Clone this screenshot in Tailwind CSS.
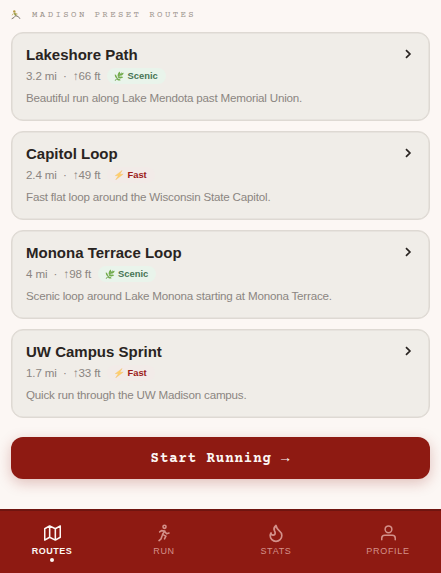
<!DOCTYPE html>
<html lang="en">
<head>
  <meta charset="UTF-8" />
  <meta name="viewport" content="width=device-width, initial-scale=1.0" />
  <title>Madison Routes</title>
  <script src="https://cdn.jsdelivr.net/npm/@tailwindcss/browser@4"></script>
</head>
<body class="bg-[#fcf7f4] h-[573px] overflow-hidden flex flex-col font-['Liberation_Sans',Arial,sans-serif] text-[#292421]">
  <!-- Shared icons -->
  <svg class="hidden">
    <symbol id="leaf" viewBox="0 0 12 12">
      <path d="M1 11.5C4 9.5 7 6 9 2" fill="none" stroke="#4d8a2d" stroke-width="1" />
      <path d="M4.8 7.5C3.600 4.500 5 2 6.800 .5C8 3 7.200 5.500 4.800 7.500zM7 5.300C8 3 9.500 2 11.600 2C11.300 4.500 9.500 5.700 7 5.300zM4.800 8.200C7 6.500 9.500 6.300 11 7.300C9.500 9.300 7 9.500 4.800 8.200zM3.500 9C1.500 8 .7 6 1 3.800C3.200 5 4 7 3.500 9zM3.200 9.600C5 9 7 9.500 8 11C6 12 4.200 11.300 3.200 9.600z" fill="#72ad4c" />
    </symbol>
    <symbol id="bolt" viewBox="0 0 12 12">
      <path d="M9.800 .5L1.500 6.800L5.300 6.600L2 11.800L11 5L7 5.100z" fill="#ffd06a" stroke="#f4b860" stroke-width=".4" />
    </symbol>
    <symbol id="chevron" viewBox="0 0 10 12">
      <path d="M3 2.200L6.900 6L3 9.800" fill="none" stroke="#292421" stroke-width="1.700" />
    </symbol>
  </svg>

  <main class="h-[509px] shrink-0 px-[11px] pt-[9px]">
    <h1 class="flex items-center h-3 text-[9px] leading-3 tracking-[2.42px] text-[#9c958e] font-['Courier_Prime','Courier_New','Liberation_Mono',monospace]">
      <svg class="w-[10px] h-[10px] mr-[11px]" viewBox="0 0 10 10" fill="none">
        <circle cx="3.300" cy="1.500" r="1.200" fill="#b59a42" />
        <path d="M3.500 3L4.900 5.500" stroke="#929b44" stroke-width="1.800" />
        <path d="M4.900 5.500L3 7.500L.7 8.800M5 5.800L7.300 6.600L9 8.800" stroke="#7d766d" stroke-width="1" />
        <path d="M2.300 3.500L1.200 5.300M4.500 3.500L6.500 4" stroke="#c5aa62" stroke-width=".9" />
      </svg>
      MADISON PRESET ROUTES
    </h1>

    <!-- Route cards -->
    <section class="mt-[10.500px] flex flex-col gap-[9.500px]">
      <article class="relative h-[89.500px] rounded-xl border-[1.500px] border-[#ded9d3] bg-[#f0ede8] shadow-[inset_0_0_0_.5px_#ded9d3] pl-[14px] pt-[13px]">
        <h2 class="text-[15px] leading-[18px] font-bold">Lakeshore Path</h2>
        <div class="flex items-center h-[18px] mt-[3px] text-[11.600px] tracking-[-.13px] text-[#8b8581]">
          <span class="whitespace-pre">3.2 mi  ·  ↑66 ft</span>
          <span class="flex items-center h-4 mt-px ml-[7px] pl-[7px] pr-2 rounded-full bg-[#e9f4eb] text-[9.400px] tracking-normal font-bold text-[#487555]"><svg class="w-[10px] h-[10px] mr-[3px] -mt-px"><use href="#leaf" /></svg>Scenic</span>
        </div>
        <p class="mt-[5px] text-[11.600px] leading-4 tracking-[-.19px] text-[#8b8581]">Beautiful run along Lake Mendota past Memorial Union.</p>
        <svg class="absolute right-4 top-[15px] w-[10px] h-3"><use href="#chevron" /></svg>
      </article>

      <article class="relative h-[89.500px] rounded-xl border-[1.500px] border-[#ded9d3] bg-[#f0ede8] shadow-[inset_0_0_0_.5px_#ded9d3] pl-[14px] pt-[13px]">
        <h2 class="text-[15px] leading-[18px] font-bold">Capitol Loop</h2>
        <div class="flex items-center h-[18px] mt-[3px] text-[11.600px] tracking-[-.13px] text-[#8b8581]">
          <span class="whitespace-pre">2.4 mi  ·  ↑49 ft</span>
          <span class="flex items-center h-4 mt-px ml-[7px] pl-[7px] pr-2 rounded-full bg-[#f2ebe8] text-[9.400px] tracking-normal font-bold text-[#9c1c18]"><svg class="w-[10px] h-[10px] mr-[3px] -mt-px"><use href="#bolt" /></svg>Fast</span>
        </div>
        <p class="mt-[5px] text-[11.600px] leading-4 tracking-[-.19px] text-[#8b8581]">Fast flat loop around the Wisconsin State Capitol.</p>
        <svg class="absolute right-4 top-[15px] w-[10px] h-3"><use href="#chevron" /></svg>
      </article>

      <article class="relative h-[89.500px] rounded-xl border-[1.500px] border-[#ded9d3] bg-[#f0ede8] shadow-[inset_0_0_0_.5px_#ded9d3] pl-[14px] pt-[13px]">
        <h2 class="text-[15px] leading-[18px] font-bold">Monona Terrace Loop</h2>
        <div class="flex items-center h-[18px] mt-[3px] text-[11.600px] tracking-[-.13px] text-[#8b8581]">
          <span class="whitespace-pre">4 mi  ·  ↑98 ft</span>
          <span class="flex items-center h-4 mt-px ml-[7px] pl-[7px] pr-2 rounded-full bg-[#e9f4eb] text-[9.400px] tracking-normal font-bold text-[#487555]"><svg class="w-[10px] h-[10px] mr-[3px] -mt-px"><use href="#leaf" /></svg>Scenic</span>
        </div>
        <p class="mt-[5px] text-[11.600px] leading-4 tracking-[-.19px] text-[#8b8581]">Scenic loop around Lake Monona starting at Monona Terrace.</p>
        <svg class="absolute right-4 top-[15px] w-[10px] h-3"><use href="#chevron" /></svg>
      </article>

      <article class="relative h-[89.500px] rounded-xl border-[1.500px] border-[#ded9d3] bg-[#f0ede8] shadow-[inset_0_0_0_.5px_#ded9d3] pl-[14px] pt-[13px]">
        <h2 class="text-[15px] leading-[18px] font-bold">UW Campus Sprint</h2>
        <div class="flex items-center h-[18px] mt-[3px] text-[11.600px] tracking-[-.13px] text-[#8b8581]">
          <span class="whitespace-pre">1.7 mi  ·  ↑33 ft</span>
          <span class="flex items-center h-4 mt-px ml-[7px] pl-[7px] pr-2 rounded-full bg-[#f2ebe8] text-[9.400px] tracking-normal font-bold text-[#9c1c18]"><svg class="w-[10px] h-[10px] mr-[3px] -mt-px"><use href="#bolt" /></svg>Fast</span>
        </div>
        <p class="mt-[5px] text-[11.600px] leading-4 tracking-[-.19px] text-[#8b8581]">Quick run through the UW Madison campus.</p>
        <svg class="absolute right-4 top-[15px] w-[10px] h-3"><use href="#chevron" /></svg>
      </article>
    </section>

    <button class="mt-[18.500px] w-full h-[42px] pt-[3px] rounded-xl bg-[#8e1a12] shadow-[0_4px_14px_#8e1a1240] text-[#fcf7f4] text-sm font-bold tracking-[.93px] font-['Courier_Prime','Courier_New','Liberation_Mono',monospace]">Start Running →</button>
  </main>

  <!-- Bottom tabs -->
  <nav class="h-16 shrink-0 w-[448px] -ml-1 flex border-t-2 border-[#6f1510] bg-[#8e1a12] text-[9px] leading-3 tracking-[.7px] text-[#d4918a]">
    <a href="#" class="w-28 flex flex-col items-center pt-[13px] text-[#fcf7f4] font-bold tracking-[.5px]">
      <svg class="w-[17px] h-[18px]" viewBox="0 0 24 24" fill="none" stroke="currentColor" stroke-width="2.200" stroke-linejoin="round"><path d="M1 6V22L8 18L16 22L23 18V2L16 6L8 2zM8 2V18M16 6V22" /></svg>
      <span class="mt-[3px]">ROUTES</span>
      <span class="mt-px size-1 rounded-full bg-[#fcf7f4]"></span>
    </a>
    <a href="#" class="w-28 flex flex-col items-center pt-[13px]">
      <svg class="w-3 h-[18px]" viewBox="1 1 35 50" fill="none" stroke="currentColor" stroke-width="4.600" stroke-linecap="round" stroke-linejoin="round"><circle cx="20" cy="8" r="4.500" /><path d="M6 23L11 19L21 20L14 30L24 35L20 43M22 23L26 28L33 26M13 34L10 43L4 48" /></svg>
      <span class="mt-[3px]">RUN</span>
    </a>
    <a href="#" class="w-28 flex flex-col items-center pt-[13px]">
      <svg class="w-[20px] h-[20px] -my-px" viewBox="0 0 24 24" fill="none" stroke="currentColor" stroke-width="2" stroke-linecap="round" stroke-linejoin="round"><path d="M8.500 14.500A2.500 2.500 0 0 0 11 12c0-1.380-.5-2-1-3-1.072-2.143-.224-4.054 2-6 .5 2.500 2 4.900 4 6.500 2 1.600 3 3.500 3 5.500a7 7 0 1 1-14 0c0-1.153.433-2.294 1-3a2.500 2.500 0 0 0 2.500 2.500z" /></svg>
      <span class="mt-[3px]">STATS</span>
    </a>
    <a href="#" class="w-28 flex flex-col items-center pt-[13px]">
      <svg class="w-[19px] h-[18px]" viewBox="0 0 24 24" fill="none" stroke="currentColor" stroke-width="2" stroke-linecap="round" stroke-linejoin="round"><path d="M21 21v-2a4 4 0 0 0-4-4H7a4 4 0 0 0-4 4v2" /><circle cx="12" cy="7" r="4.500" /></svg>
      <span class="mt-[3px]">PROFILE</span>
    </a>
  </nav>
</body>
</html>
